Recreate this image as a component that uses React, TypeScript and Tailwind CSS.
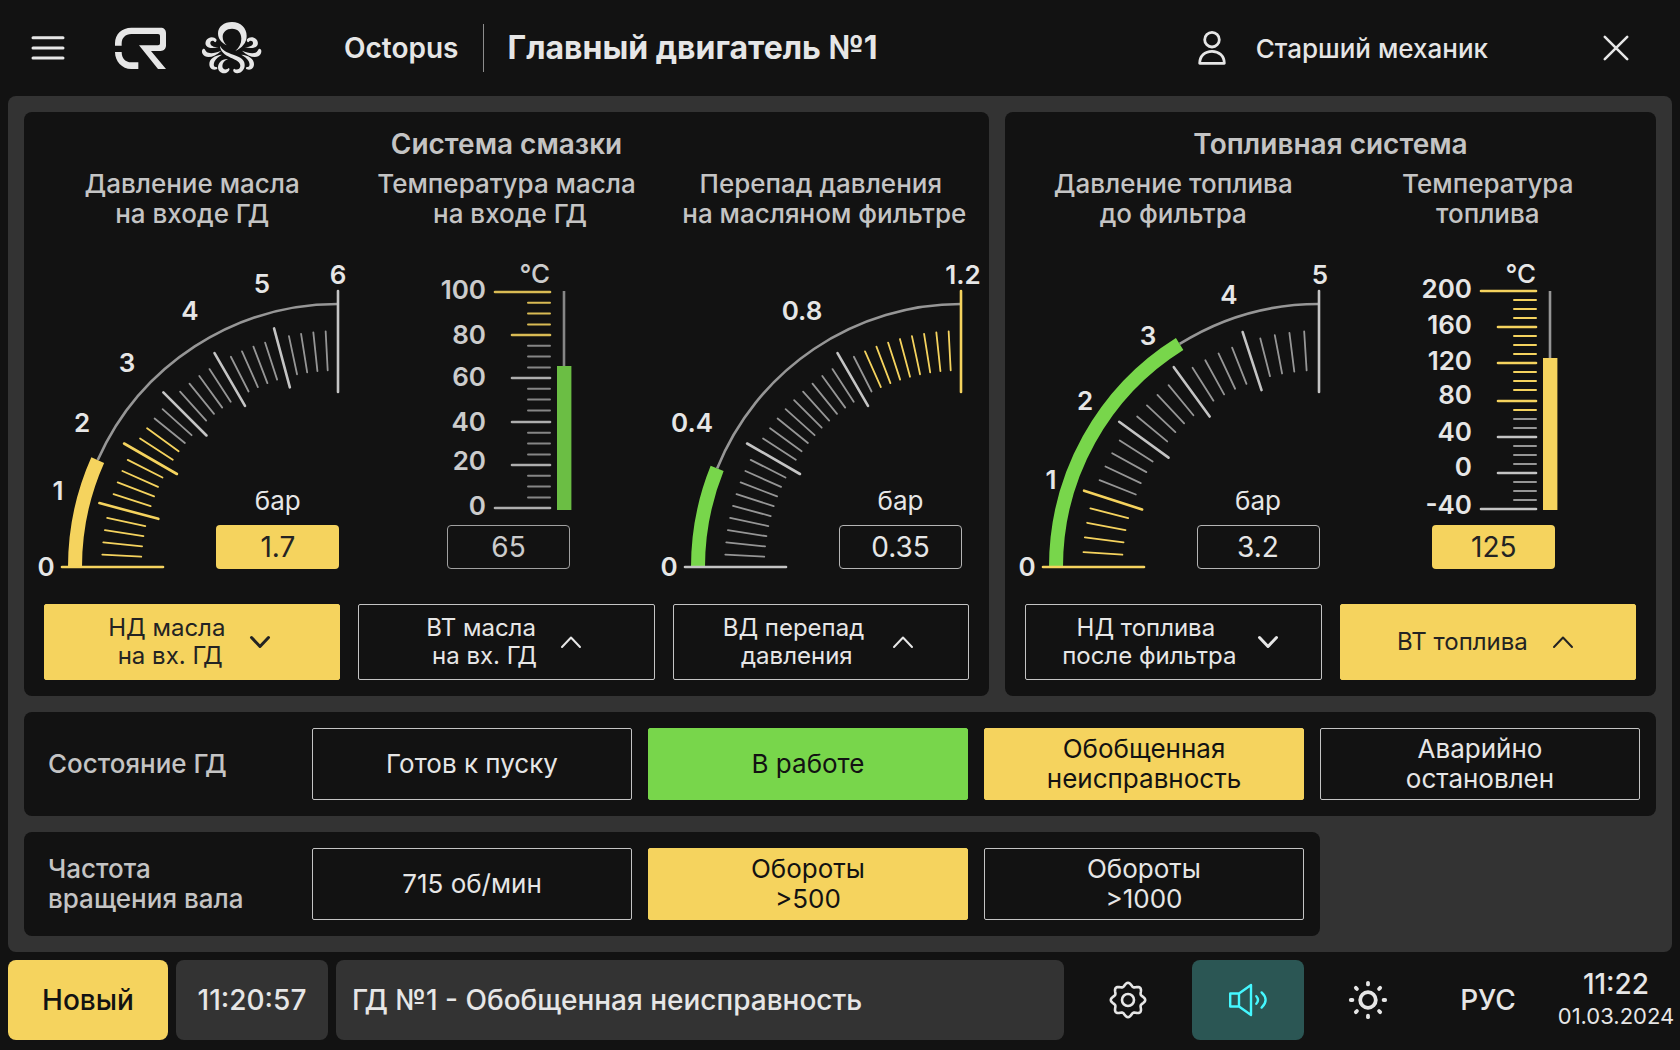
import type { ReactNode } from 'react';

const YELLOW = '#f5d35e';
const GREEN = '#78d64b';
const LIGHT = '#e6e6e6';
const MAJOR = '#c4c4c4';
const MINOR = '#969696';

// ---------- icons ----------

const MenuIcon = () => (
  <svg width="36" height="36" viewBox="0 0 36 36" fill="none" stroke={LIGHT} strokeWidth="3" strokeLinecap="round">
    <path d="M3 7.7H33M3 18H33M3 28H33" />
  </svg>
);

const CompanyLogo = () => (
  <svg width="64" height="56" viewBox="0 0 192 168" fill={LIGHT}>
    <path d="M21 77V70C21 42 42 23 70 23H158C168 23 174 29 174 39V76C174 86 168 93 158 93H129L174 147H150L93 76H150C154 76 156 74 156 70V49C156 44 154 42 150 42H70C52 42 41 54 41 70V77Z" />
    <path d="M21 96H41C41 115 52 127 70 127H91V147H70C42 147 21 124 21 96Z" />
  </svg>
);

const tentacles = [
  'M55 64C48 54 30 56 24 68C18 82 28 96 62 88C46 88 36 82 37 74C38 68 46 66 50 72C54 74 57 68 55 64Z',
  'M18 92C12 92 10 100 14 108C22 122 48 120 70 98C52 106 34 108 26 102C22 98 22 94 18 92Z',
  'M72 110C50 112 34 122 34 138C34 150 42 158 56 154C60 152 58 146 54 147C46 148 46 138 50 130C54 122 62 116 72 110Z',
];

const OctopusLogo = () => (
  <svg width="66" height="60" viewBox="0 0 198 180" fill={LIGHT}>
    <path d="M86 82C70 74 60 62 60 46C60 26 78 12 102 12C128 12 146 30 146 54C146 74 132 90 112 99C124 88 130 76 130 62C130 44 120 32 102 32C86 32 74 42 74 56C74 66 78 74 86 82Z" />
    <path d="M66 83C72 96 88 104 106 110C128 117 142 126 140 144C138 160 124 168 114 165C104 162 104 154 109 152C116 158 126 154 127 144C128 132 114 126 98 119C80 110 66 100 66 83Z" />
    <path d="M90 123C70 122 60 136 60 148C60 162 74 170 86 164C96 158 96 152 92 150C84 158 73 154 73 144C73 134 80 128 90 123Z" />
    {tentacles.map((d) => (
      <path key={d} d={d} />
    ))}
    <g transform="translate(202 0) scale(-1 1)">
      {tentacles.map((d) => (
        <path key={d} d={d} />
      ))}
    </g>
  </svg>
);

const UserIcon = () => (
  <svg width="32" height="36" viewBox="0 0 32 36" fill="none" stroke={LIGHT} strokeWidth="2.8" strokeLinejoin="round">
    <circle cx="16" cy="9.7" r="7.3" />
    <path d="M3.7 33.3C3.7 26 9 21.3 16 21.3S28.3 26 28.3 33.3Z" />
  </svg>
);

const CloseIcon = () => (
  <svg width="32" height="32" viewBox="0 0 32 32" fill="none" stroke={LIGHT} strokeWidth="2.6" strokeLinecap="round">
    <path d="M4.8 4.8L27.2 27.2M27.2 4.8L4.8 27.2" />
  </svg>
);

const gearPoints = Array.from({ length: 128 }, (_, i) => {
  const a = (i / 128) * Math.PI * 2;
  const r = 15.5 + 1.7 * Math.cos(8 * a);
  return `${(20 + r * Math.sin(a)).toFixed(2)},${(20 - r * Math.cos(a)).toFixed(2)}`;
}).join(' ');

const GearIcon = () => (
  <svg width="40" height="40" viewBox="0 0 40 40" fill="none" stroke={LIGHT} strokeWidth="2.6" strokeLinejoin="round">
    <polygon points={gearPoints} />
    <circle cx="20" cy="20" r="6" />
  </svg>
);

const SpeakerIcon = () => (
  <svg width="40" height="40" viewBox="0 0 40 40" fill="none" stroke="#45f7ff" strokeWidth="2.4" strokeLinejoin="round" strokeLinecap="round">
    <path d="M11 13.5H2.2V26.5H11L23 35V5L11 13.5V26.5" />
    <path d="M28.3 16.2Q31.7 20 28.3 23.8" />
    <path d="M33.6 12.4Q41.6 20 33.6 27.6" />
  </svg>
);

const SunIcon = () => (
  <svg width="40" height="40" viewBox="0 0 40 40" fill="none" stroke={LIGHT} strokeWidth="3.8" strokeLinecap="round">
    <circle cx="20" cy="20" r="7.8" />
    {[0, 45, 90, 135, 180, 225, 270, 315].map((a) => (
      <path key={a} d="M20 4.4V2.8" transform={`rotate(${a} 20 20)`} />
    ))}
  </svg>
);

const Chevron = ({ down }: { down?: boolean }) => (
  <svg width="32" height="32" viewBox="0 0 32 32" fill="none" stroke="currentColor" strokeLinecap="round" strokeLinejoin="round" className="shrink-0">
    {down ? <path d="M7.5 11.5L16 20.5L24.5 11.5" strokeWidth="3" /> : <path d="M7 21L16 11.5L25 21" strokeWidth="2" />}
  </svg>
);

// ---------- value box ----------

const ValueBox = ({ value, alert }: { value: string; alert?: boolean }) => (
  <output
    className={`flex h-11 w-[123px] items-center justify-center rounded text-[28px] leading-none ${
      alert ? 'bg-[#f5d35e] text-[#232323]' : 'border border-[#b4b4b4] text-[#e6e6e6]'
    }`}
  >
    {value}
  </output>
);

// ---------- arc gauge ----------

interface ArcLabel {
  text: string;
  x: number;
  y: number;
}

interface ArcGaugeProps {
  divisions: number;
  majorEvery: number;
  isWarn: (index: number) => boolean;
  sweep: number;
  color: string;
  labels: ArcLabel[];
  value: string;
  alert?: boolean;
}

const CX = 298;
const CY = 314;

const polar = (r: number, deg: number): [number, number] => {
  const a = (deg * Math.PI) / 180;
  return [CX - r * Math.cos(a), CY - r * Math.sin(a)];
};

const arcPath = (r: number, from: number, to: number) => {
  const [x1, y1] = polar(r, from);
  const [x2, y2] = polar(r, to);
  return `M${x1} ${y1}A${r} ${r} 0 0 1 ${x2} ${y2}`;
};

const ArcGauge = ({ divisions, majorEvery, isWarn, sweep, color, labels, value, alert }: ArcGaugeProps) => (
  <div className="grid justify-end">
    <svg width="300" height="316" viewBox="0 0 300 316" className="col-start-1 row-start-1 overflow-visible">
      <path d={arcPath(263, sweep, 90)} fill="none" stroke={MINOR} strokeWidth="2.6" />
      <path d={arcPath(263, 0, sweep)} fill="none" stroke={color} strokeWidth="14" />
      {Array.from({ length: divisions + 1 }, (_, i) => {
        const deg = (i / divisions) * 90;
        const edge = i === 0 || i === divisions;
        const major = i % majorEvery === 0;
        const [x1, y1] = polar(edge ? 276 : major ? 247 : 236, deg);
        const [x2, y2] = polar(edge ? 175 : major ? 186 : 197, deg);
        return (
          <line
            key={i}
            x1={x1}
            y1={y1}
            x2={x2}
            y2={y2}
            stroke={isWarn(i) ? YELLOW : major ? MAJOR : MINOR}
            strokeWidth={major ? 2.6 : 1.8}
            strokeLinecap="round"
          />
        );
      })}
      {labels.map((l) => (
        <text key={l.text} x={l.x} y={l.y + 9} textAnchor="middle" fill={LIGHT} className="text-[26px] font-semibold">
          {l.text}
        </text>
      ))}
    </svg>
    <div className="col-start-1 row-start-1 mr-px flex flex-col items-center gap-2 self-end justify-self-end">
      <span className="text-[26px] leading-8 text-[#e6e6e6]">бар</span>
      <ValueBox value={value} alert={alert} />
    </div>
  </div>
);

// ---------- thermometer ----------

interface ScaleMark {
  text: string;
  y: number;
  labelY: number;
}

interface ThermometerProps {
  marks: ScaleMark[];
  minorStep: number;
  warnUntil: number;
  level: number;
  color: string;
  value: string;
  alert?: boolean;
}

const Thermometer = ({ marks, minorStep, warnUntil, level, color, value, alert }: ThermometerProps) => (
  <div className="flex flex-col items-center gap-2.5">
    <svg width="132" height="262" viewBox="0 0 132 262" className="overflow-visible">
      <text x="108" y="30" textAnchor="end" fill={LIGHT} className="text-[26px] font-medium">
        °C
      </text>
      {marks.map((m, i) => {
        const last = i === marks.length - 1;
        const edge = i === 0 || last;
        return (
          <g key={m.text}>
            <line x1={edge ? 53 : 70} x2="108" y1={m.y} y2={m.y} stroke={m.y <= warnUntil ? YELLOW : MAJOR} strokeWidth="2.6" strokeLinecap="round" />
            {!last &&
              [1, 2, 3].map((k) => {
                const y = m.y + k * minorStep;
                return <line key={k} x1="86" x2="108" y1={y} y2={y} stroke={y <= warnUntil ? YELLOW : MINOR} strokeWidth="2" strokeLinecap="round" />;
              })}
            <text x="44" y={m.labelY + 9} textAnchor="end" fill={LIGHT} className="text-[26px] font-semibold">
              {m.text}
            </text>
          </g>
        );
      })}
      <line x1="122" x2="122" y1="38" y2={level} stroke={MINOR} strokeWidth="2.6" />
      <rect x="115" y={level} width="14.4" height={257 - level} fill={color} />
    </svg>
    <ValueBox value={value} alert={alert} />
  </div>
);

// ---------- layout pieces ----------

const Sensor = ({ title, children }: { title: [string, string]; children: ReactNode }) => (
  <div className="flex min-w-0 flex-col">
    <h3 className="text-center text-[26px] leading-[30px] font-medium whitespace-nowrap text-[#c4c4c4]">
      {title[0]}
      <br />
      {title[1]}
    </h3>
    <div className="mt-6">{children}</div>
  </div>
);

interface SensorButtonProps {
  lines: string[];
  down?: boolean;
  active?: boolean;
  wide?: boolean;
}

const SensorButton = ({ lines, down, active, wide }: SensorButtonProps) => (
  <button
    type="button"
    className={`flex h-[76px] items-center justify-center rounded-xs border text-2xl leading-7 ${wide ? 'gap-4' : 'gap-3'} ${
      active ? 'border-[#f5d35e] bg-[#f5d35e] text-[#232323]' : 'border-[#c4c4c4] text-[#e6e6e6]'
    }`}
  >
    <span className="text-center whitespace-nowrap">
      {lines[0]}&nbsp;
      {lines[1] && (
        <>
          <br />
          {lines[1]}
        </>
      )}
    </span>
    <Chevron down={down} />
  </button>
);

const tones = {
  off: 'border-[#c4c4c4] text-[#e6e6e6]',
  green: 'border-[#78d64b] bg-[#78d64b] text-[#121212]',
  yellow: 'border-[#f5d35e] bg-[#f5d35e] text-[#121212]',
};

const StatusCell = ({ lines, tone }: { lines: string[]; tone: keyof typeof tones }) => (
  <div className={`flex h-18 flex-1 flex-col items-center justify-center rounded-xs border text-[26px] leading-[30px] ${tones[tone]}`}>
    {lines.map((line) => (
      <span key={line}>{line}</span>
    ))}
  </div>
);

const StatusRow = ({ label, className = '', children }: { label: string[]; className?: string; children: ReactNode }) => (
  <section className={`flex items-center rounded-lg bg-[#121212] p-4 ${className}`}>
    <h2 className="flex w-[272px] shrink-0 flex-col pl-2 text-[26px] leading-[30px] font-medium text-[#c4c4c4]">
      {label.map((line) => (
        <span key={line}>{line}</span>
      ))}
    </h2>
    <div className="flex flex-1 gap-4">{children}</div>
  </section>
);

const panelTitle = 'text-center text-[28px] leading-8 font-semibold text-[#c4c4c4]';

export default function App() {
  return (
    <div className="flex min-h-screen flex-col bg-[#121212] font-[Inter,sans-serif] text-[#e6e6e6]">
      <header className="flex h-24 items-center pr-10 pl-6">
        <button type="button" aria-label="Меню" className="flex size-12 items-center justify-center">
          <MenuIcon />
        </button>
        <div className="ml-9 flex items-center gap-[26px]">
          <CompanyLogo />
          <OctopusLogo />
        </div>
        <span className="ml-20 text-[28px] font-semibold">Octopus</span>
        <div className="mx-6 h-12 w-px bg-[#8c8c8c]" />
        <h1 className="text-[32px] font-bold">Главный двигатель №1</h1>
        <div className="mr-26 ml-auto flex items-center gap-7">
          <UserIcon />
          <span className="text-[26px] font-medium">Старший механик</span>
        </div>
        <button type="button" aria-label="Закрыть" className="flex size-12 items-center justify-center">
          <CloseIcon />
        </button>
      </header>

      <main className="mx-2 flex flex-col gap-4 rounded-lg bg-[#333333] p-4">
        <div className="grid grid-cols-[965fr_651fr] gap-4">
          <section className="rounded-lg bg-[#121212] p-4 px-5">
            <h2 className={panelTitle}>Система смазки</h2>
            <div className="mt-[9px] grid grid-cols-3 gap-x-[18px] gap-y-[35px]">
              <Sensor title={['Давление масла', 'на входе ГД']}>
                <ArcGauge
                  divisions={30}
                  majorEvery={5}
                  isWarn={(i) => i <= 12}
                  sweep={24}
                  color={YELLOW}
                  labels={[
                    { text: '0', x: 6, y: 314 },
                    { text: '1', x: 18, y: 238 },
                    { text: '2', x: 42, y: 170 },
                    { text: '3', x: 87, y: 110 },
                    { text: '4', x: 150, y: 58 },
                    { text: '5', x: 222, y: 31 },
                    { text: '6', x: 298, y: 22 },
                  ]}
                  value="1.7"
                  alert
                />
              </Sensor>
              <Sensor title={['Температура масла', '\u00a0на входе ГД']}>
                <div className="pl-1 opacity-88">
                  <Thermometer
                    marks={[
                      { text: '100', y: 39, labelY: 37 },
                      { text: '80', y: 82, labelY: 82 },
                      { text: '60', y: 125, labelY: 124 },
                      { text: '40', y: 169, labelY: 169 },
                      { text: '20', y: 212, labelY: 208 },
                      { text: '0', y: 255, labelY: 253 },
                    ]}
                    minorStep={10.8}
                    warnUntil={83}
                    level={113}
                    color={GREEN}
                    value="65"
                  />
                </div>
              </Sensor>
              <Sensor title={['Перепад давления', '\u00a0на масляном фильтре']}>
                <div className="pr-1.5">
                  <ArcGauge
                    divisions={30}
                    majorEvery={10}
                    isWarn={(i) => i >= 22}
                    sweep={22}
                    color={GREEN}
                    labels={[
                      { text: '0', x: 6, y: 314 },
                      { text: '0.4', x: 29, y: 170 },
                      { text: '0.8', x: 139, y: 58 },
                      { text: '1.2', x: 300, y: 22 },
                    ]}
                    value="0.35"
                  />
                </div>
              </Sensor>
              <SensorButton lines={['НД масла', 'на вх. ГД']} down active />
              <SensorButton lines={['ВТ масла', 'на вх. ГД']} />
              <SensorButton lines={['ВД перепад', 'давления']} wide />
            </div>
          </section>

          <section className="rounded-lg bg-[#121212] p-4 px-5">
            <h2 className={panelTitle}>Топливная система</h2>
            <div className="mt-[9px] grid grid-cols-2 gap-x-[18px] gap-y-[35px]">
              <Sensor title={['Давление топлива', 'до фильтра']}>
                <div className="pr-px">
                  <ArcGauge
                    divisions={25}
                    majorEvery={5}
                    isWarn={(i) => i <= 5}
                    sweep={58}
                    color={GREEN}
                    labels={[
                      { text: '0', x: 6, y: 314 },
                      { text: '1', x: 30, y: 227 },
                      { text: '2', x: 64, y: 148 },
                      { text: '3', x: 127, y: 83 },
                      { text: '4', x: 208, y: 42 },
                      { text: '5', x: 299, y: 22 },
                    ]}
                    value="3.2"
                  />
                </div>
              </Sensor>
              <Sensor title={['Температура', 'топлива']}>
                <div className="pl-3">
                  <Thermometer
                    marks={[
                      { text: '200', y: 38, labelY: 36 },
                      { text: '160', y: 74, labelY: 72 },
                      { text: '120', y: 110, labelY: 108 },
                      { text: '80', y: 148, labelY: 142 },
                      { text: '40', y: 184, labelY: 179 },
                      { text: '0', y: 220, labelY: 214 },
                      { text: '-40', y: 256, labelY: 252 },
                    ]}
                    minorStep={9}
                    warnUntil={158}
                    level={105}
                    color={YELLOW}
                    value="125"
                    alert
                  />
                </div>
              </Sensor>
              <SensorButton lines={['НД топлива', 'после фильтра']} down wide />
              <SensorButton lines={['ВТ топлива']} active />
            </div>
          </section>
        </div>

        <StatusRow label={['Состояние ГД']}>
          <StatusCell lines={['Готов к пуску']} tone="off" />
          <StatusCell lines={['В работе']} tone="green" />
          <StatusCell lines={['Обобщенная', 'неисправность']} tone="yellow" />
          <StatusCell lines={['Аварийно', 'остановлен']} tone="off" />
        </StatusRow>

        <StatusRow label={['Частота', 'вращения вала']} className="mr-84">
          <StatusCell lines={['715 об/мин']} tone="off" />
          <StatusCell lines={['Обороты', '>500']} tone="yellow" />
          <StatusCell lines={['Обороты', '>1000']} tone="off" />
        </StatusRow>
      </main>

      <footer className="flex gap-2 p-2 text-[28px] font-medium">
        <button type="button" className="flex h-20 w-40 items-center justify-center rounded-lg bg-[#f5d35e] text-[#121212]">
          Новый
        </button>
        <div className="flex w-38 items-center justify-center rounded-lg bg-[#333333]">11:20:57</div>
        <div className="flex flex-1 items-center rounded-lg bg-[#333333] px-4">ГД №1 - Обобщенная неисправность</div>
        <button type="button" aria-label="Настройки" className="flex w-28 items-center justify-center rounded-lg">
          <GearIcon />
        </button>
        <button type="button" aria-label="Звук" className="flex w-28 items-center justify-center rounded-lg bg-[#2b5654]">
          <SpeakerIcon />
        </button>
        <button type="button" aria-label="Яркость" className="flex w-28 items-center justify-center rounded-lg">
          <SunIcon />
        </button>
        <button type="button" className="flex w-28 items-center justify-center rounded-lg">
          РУС
        </button>
        <div className="ml-2 flex w-28 flex-col items-center justify-center">
          <span className="leading-8">11:22</span>
          <span className="text-[22px] leading-8 font-normal">01.03.2024</span>
        </div>
      </footer>
    </div>
  );
}
